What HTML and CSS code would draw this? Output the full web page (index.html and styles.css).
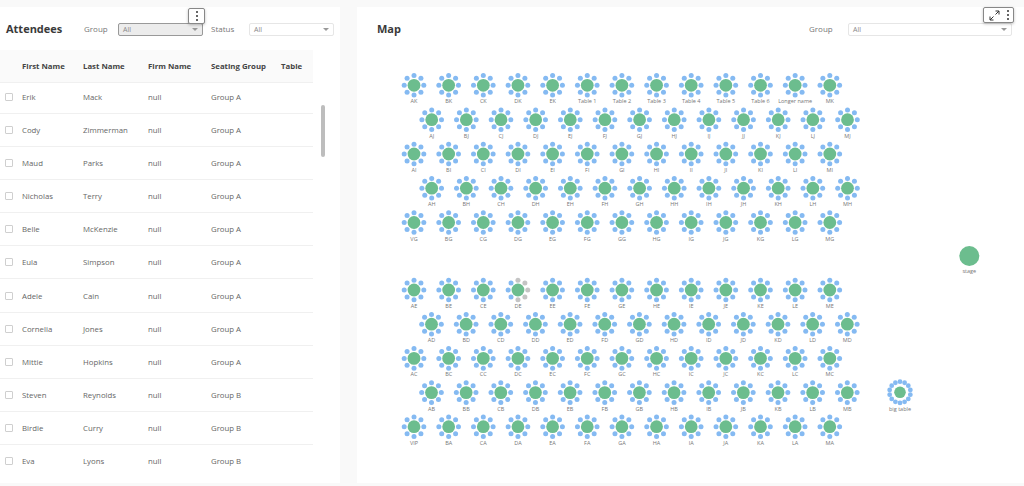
FILE: index.html
```html
<!DOCTYPE html>
<html lang="en">
<head>
    <meta charset="UTF-8">
    <meta name="viewport" content="width=device-width, initial-scale=1.0">
    <title>Seating Map</title>
    <link rel="stylesheet" href="styles.css">
</head>
<body>
    <div class="page">
        <!-- Attendees panel -->
        <section class="panel attendees">
            <div class="panel-head">
                <h2>Attendees</h2>
                <label class="filter-label group-label">Group</label>
                <div class="select select-active"><span>All</span><i class="caret"></i></div>
                <label class="filter-label status-label">Status</label>
                <div class="select status-select"><span>All</span><i class="caret"></i></div>
                <div class="visual-menu attendees-menu">
                    <span class="dots"><b></b><b></b><b></b></span>
                </div>
            </div>
            <div class="table-wrap">
                <table>
                    <thead>
                        <tr><th class="col-check"></th><th class="col-first">First Name</th><th class="col-last">Last Name</th><th class="col-firm">Firm Name</th><th class="col-group">Seating Group</th><th>Table</th></tr>
                    </thead>
                    <tbody>
                        <tr class="first-row"><td><i class="check"></i></td><td>Erik</td><td>Mack</td><td>null</td><td>Group A</td><td></td></tr>
                        <tr><td><i class="check"></i></td><td>Cody</td><td>Zimmerman</td><td>null</td><td>Group A</td><td></td></tr>
                        <tr><td><i class="check"></i></td><td>Maud</td><td>Parks</td><td>null</td><td>Group A</td><td></td></tr>
                        <tr><td><i class="check"></i></td><td>Nicholas</td><td>Terry</td><td>null</td><td>Group A</td><td></td></tr>
                        <tr><td><i class="check"></i></td><td>Belle</td><td>McKenzie</td><td>null</td><td>Group A</td><td></td></tr>
                        <tr><td><i class="check"></i></td><td>Eula</td><td>Simpson</td><td>null</td><td>Group A</td><td></td></tr>
                        <tr><td><i class="check"></i></td><td>Adele</td><td>Cain</td><td>null</td><td>Group A</td><td></td></tr>
                        <tr><td><i class="check"></i></td><td>Cornelia</td><td>Jones</td><td>null</td><td>Group A</td><td></td></tr>
                        <tr><td><i class="check"></i></td><td>Mittie</td><td>Hopkins</td><td>null</td><td>Group A</td><td></td></tr>
                        <tr><td><i class="check"></i></td><td>Steven</td><td>Reynolds</td><td>null</td><td>Group B</td><td></td></tr>
                        <tr><td><i class="check"></i></td><td>Birdie</td><td>Curry</td><td>null</td><td>Group B</td><td></td></tr>
                        <tr><td><i class="check"></i></td><td>Eva</td><td>Lyons</td><td>null</td><td>Group B</td><td></td></tr>
                    </tbody>
                </table>
                <div class="scrollbar"></div>
            </div>
        </section>

        <!-- Map panel -->
        <section class="panel map">
            <div class="panel-head">
                <h2>Map</h2>
                <label class="filter-label map-label">Group</label>
                <div class="select map-select"><span>All</span><i class="caret"></i></div>
                <div class="visual-menu map-menu">
                    <svg class="expand" width="11" height="11" viewBox="0 0 11 11">
                        <path d="M1 10 L4.5 6.5 M1 6.5 V10 H4.5 M6.5 4.5 L10 1 M6.5 1 H10 V4.5"/>
                    </svg>
                    <span class="dots"><b></b><b></b><b></b></span>
                </div>
            </div>
            <svg id="seats" class="seats" viewBox="357 50 667 433"></svg>
        </section>
    </div>
    <script src="script.js"></script>
</body>
</html>
```

FILE: styles.css
```css
/* General Styles */
body {
    margin: 0;
    background: #f9f9f9;
    font-family: "Open Sans", Arial, sans-serif;
    color: #666;
    overflow: hidden;
}

.page {
    display: flex;
    gap: 17px;
    width: 1024px;
    height: 486px;
    padding-top: 7px;
    box-sizing: border-box;
}

.panel {
    background: #fff;
    height: 476px;
}

.attendees {
    width: 340px;
}

.map {
    width: 667px;
}

/* Panel header */
.panel-head {
    position: relative;
    display: flex;
    align-items: center;
    height: 43px;
    padding-top: 2px;
    box-sizing: border-box;
}

h2 {
    margin: 0 0 2px;
    font-size: 11px;
    font-weight: 700;
    color: #3a3a3a;
}

.attendees h2 {
    margin-left: 6px;
    width: 78px;
}

.map h2 {
    margin-left: 20px;
}

.filter-label {
    margin-bottom: 2px;
    font-size: 8px;
    color: #777;
}

.group-label {
    width: 34px;
}

.status-label {
    margin-left: 8px;
    width: 38px;
}

.map-label {
    margin-left: auto;
    width: 39px;
}

.select {
    position: relative;
    display: flex;
    align-items: center;
    width: 85px;
    height: 13px;
    padding-left: 4px;
    box-sizing: border-box;
    border: 1px solid #e6e6e6;
    border-radius: 2px;
    background: #fff;
    font-size: 7px;
    color: #888;
}

.select-active {
    background: #ececec;
    border-color: #999;
}

.status-select {
    width: 85px;
}

.map-select {
    width: 164px;
    margin-right: 12px;
}

.caret {
    position: absolute;
    right: 4px;
    top: 4px;
    border: 3px solid transparent;
    border-top: 3px solid #999;
    border-bottom: 0;
}

/* Floating visual menus */
.visual-menu {
    position: absolute;
    display: flex;
    align-items: center;
    justify-content: center;
    height: 16px;
    box-sizing: border-box;
    background: #fff;
    border: 1px solid #888;
    border-radius: 2px;
    box-shadow: 0 1px 3px rgba(0, 0, 0, 0.25);
}

.attendees-menu {
    left: 188px;
    top: 1px;
    width: 17px;
}

.map-menu {
    left: 626px;
    top: 0;
    width: 31px;
    gap: 7px;
}

.dots {
    display: flex;
    flex-direction: column;
    gap: 2px;
}

.dots b {
    width: 2px;
    height: 2px;
    border-radius: 50%;
    background: #333;
}

.expand path {
    fill: none;
    stroke: #333;
    stroke-width: 1;
}

/* Table */
.table-wrap {
    position: relative;
}

table {
    width: 313px;
    border-collapse: collapse;
    table-layout: fixed;
    font-size: 7.8px;
}

th {
    height: 32px;
    padding: 0;
    background: #fafafa;
    border-bottom: 1px solid #f0f0f0;
    font-weight: 700;
    color: #444;
    text-align: left;
}

td {
    height: 32.1px;
    padding: 0;
    border-bottom: 1px solid #f0f0f0;
    color: #666;
}

.first-row td {
    height: 28px;
    padding-bottom: 2px;
}

tbody tr:last-child td {
    border-bottom: 0;
}

.col-check { width: 22px; }
.col-first { width: 61px; }
.col-last { width: 65px; }
.col-firm { width: 63px; }
.col-group { width: 70px; }

.check {
    display: block;
    width: 8px;
    height: 8px;
    margin-left: 5px;
    box-sizing: border-box;
    border: 1px solid #cfcfcf;
    border-radius: 1px;
}

.scrollbar {
    position: absolute;
    left: 321px;
    top: 55px;
    width: 4px;
    height: 52px;
    border-radius: 2px;
    background: #bdbdbd;
}

/* Map seats */
.seats {
    display: block;
    width: 667px;
    height: 433px;
}

.table-top {
    fill: #6cbd8e;
}

.seat {
    fill: #85baf2;
}

.seat-taken {
    fill: #c4c4c4;
}

.seat-label {
    font-size: 5.5px;
    fill: #777;
    text-anchor: middle;
}
```

FILE: script.js
```js
const svgNS = 'http://www.w3.org/2000/svg';
const seats = document.getElementById('seats');

const PITCH = 34.65;
const letters = 'ABCDEFGHIJKLM'.split('');

function addShape(tag, attrs, text) {
    const el = document.createElementNS(svgNS, tag);
    for (const key in attrs) {
        el.setAttribute(key, attrs[key]);
    }
    if (text) {
        el.textContent = text;
    }
    seats.appendChild(el);
}

// One round table with its chairs around it
function addTable(x, y, label, options = {}) {
    const count = options.count === undefined ? 8 : options.count;
    const orbit = options.orbit || 9.8;
    const taken = options.taken || [];

    for (let i = 0; i < count; i++) {
        const angle = (i / count) * Math.PI * 2;
        addShape('circle', {
            cx: x + Math.sin(angle) * orbit,
            cy: y - Math.cos(angle) * orbit,
            r: options.seatSize || 2.5,
            class: taken.includes(i) ? 'seat seat-taken' : 'seat'
        });
    }
    addShape('circle', { cx: x, cy: y, r: options.radius || 6.4, class: 'table-top' });
    addShape('text', { x: x, y: y + (options.labelGap || 18), class: 'seat-label' }, label);
}

const topNames = ['AK', 'BK', 'CK', 'DK', 'EK', 'Table 1', 'Table 2', 'Table 3', 'Table 4', 'Table 5', 'Table 6', 'Longer name', 'MK'];
const vipNames = letters.map((l) => l + 'A');
vipNames[0] = 'VIP';
const vgNames = letters.map((l) => l + 'G');
vgNames[0] = 'VG';

const rows = [
    { y: 85.3, x: 414, names: topNames },
    { y: 119.7, x: 431.7, names: letters.map((l) => l + 'J') },
    { y: 154, x: 414, names: letters.map((l) => l + 'I') },
    { y: 188.2, x: 431.7, names: letters.map((l) => l + 'H') },
    { y: 222.5, x: 414, names: vgNames },
    { y: 290, x: 414, names: letters.map((l) => l + 'E') },
    { y: 324.2, x: 431.5, names: letters.map((l) => l + 'D') },
    { y: 358.4, x: 414, names: letters.map((l) => l + 'C') },
    { y: 392.6, x: 431.5, names: letters.map((l) => l + 'B') },
    { y: 426.7, x: 414, names: vipNames }
];

rows.forEach((row) => {
    row.names.forEach((name, i) => {
        const options = name === 'DE' ? { taken: [0, 1, 2, 3, 4] } : {};
        addTable(row.x + i * PITCH, row.y, name, options);
    });
});

addTable(969.3, 256, 'stage', { count: 0, radius: 10, labelGap: 17 });
addTable(900, 392.3, 'big table', { count: 14, orbit: 10.6, seatSize: 2.4, radius: 5.8, labelGap: 19 });
```
